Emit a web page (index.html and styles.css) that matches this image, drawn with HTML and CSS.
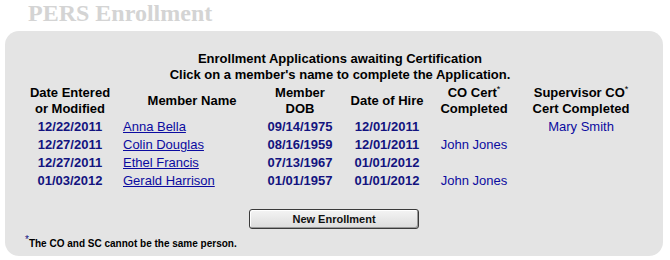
FILE: index.html
```html
<!DOCTYPE html>
<html lang="en">
<head>
  <meta charset="UTF-8" />
  <link rel="stylesheet" href="styles.css">
</head>
<body>

  <div class="page-title">PERS Enrollment</div>

  <div class="panel">
    <div class="panel-heading">
      Enrollment Applications awaiting Certification<br>
      Click on a member's name to complete the Application.
    </div>

    <table class="enroll-table">
      <colgroup>
        <col class="c-date">
        <col class="c-name">
        <col class="c-dob">
        <col class="c-hire">
        <col class="c-co">
        <col class="c-sup">
      </colgroup>
      <thead>
        <tr>
          <th>Date Entered<br>or Modified</th>
          <th>Member Name</th>
          <th>Member<br>DOB</th>
          <th>Date of Hire</th>
          <th>CO Cert<sup>*</sup><br>Completed</th>
          <th>Supervisor CO<sup>*</sup><br>Cert Completed</th>
        </tr>
      </thead>
      <tbody>
        <tr>
          <td class="date">12/22/2011</td>
          <td class="name"><a href="#">Anna Bella</a></td>
          <td class="date">09/14/1975</td>
          <td class="date">12/01/2011</td>
          <td class="who"></td>
          <td class="who">Mary Smith</td>
        </tr>
        <tr>
          <td class="date">12/27/2011</td>
          <td class="name"><a href="#">Colin Douglas</a></td>
          <td class="date">08/16/1959</td>
          <td class="date">12/01/2011</td>
          <td class="who">John Jones</td>
          <td class="who"></td>
        </tr>
        <tr>
          <td class="date">12/27/2011</td>
          <td class="name"><a href="#">Ethel Francis</a></td>
          <td class="date">07/13/1967</td>
          <td class="date">01/01/2012</td>
          <td class="who"></td>
          <td class="who"></td>
        </tr>
        <tr>
          <td class="date">01/03/2012</td>
          <td class="name"><a href="#">Gerald Harrison</a></td>
          <td class="date">01/01/1957</td>
          <td class="date">01/01/2012</td>
          <td class="who">John Jones</td>
          <td class="who"></td>
        </tr>
      </tbody>
    </table>

    <div class="actions">
      <button type="button">New Enrollment</button>
    </div>

    <div class="footnote"><sup>*</sup>The CO and SC cannot be the same person.</div>
  </div>

</body>
</html>
```

FILE: styles.css
```css
body {
  margin: 0;
  font-family: "Liberation Sans", Arial, sans-serif;
  background-color: #ffffff;
}

.page-title {
  font-family: "Liberation Serif", "Times New Roman", serif;
  font-weight: bold;
  font-size: 24px;
  line-height: 26px;
  color: #d4d4d4;
  padding-left: 28px;
}

.panel {
  margin: 5px 7px 0 5px;
  padding: 20px 0 5px 0;
  background-color: #e4e4e4;
  border-radius: 14px;
}

.panel-heading {
  text-align: center;
  font-weight: bold;
  font-size: 13px;
  line-height: 16px;
  padding-left: 12px;
}

.enroll-table {
  table-layout: fixed;
  border-collapse: collapse;
  width: 632px;
  margin: 2px 0 0 15px;
  font-size: 13px;
}

.c-date { width: 100px; }
.c-name { width: 144px; }
.c-dob { width: 72px; }
.c-hire { width: 102px; }
.c-co { width: 72px; }
.c-sup { width: 142px; }

.enroll-table th {
  padding: 0 0 1px 0;
  line-height: 16px;
  font-weight: bold;
  text-align: center;
  vertical-align: middle;
}

.enroll-table sup {
  font-size: 9px;
  font-weight: normal;
  line-height: 0;
  vertical-align: 5px;
}

.enroll-table td {
  padding: 0;
  height: 18px;
  line-height: 18px;
  text-align: center;
  white-space: nowrap;
}

.enroll-table td.date {
  font-weight: bold;
  color: #13137f;
}

.enroll-table td.name {
  text-align: left;
  padding-left: 3px;
}

.enroll-table td.name a {
  color: #0b0ba0;
  text-decoration: underline;
}

.enroll-table td.who {
  color: #0b0ba0;
}

.actions {
  text-align: center;
  margin-top: 19px;
}

.actions button {
  width: 170px;
  height: 20px;
  padding: 0;
  font-family: "Liberation Sans", Arial, sans-serif;
  font-weight: bold;
  font-size: 11px;
  color: #111;
  background: linear-gradient(#f4f4f4, #dcdcdc);
  border: 1px solid #3a3a3a;
  border-radius: 3px;
  box-shadow: inset -1px -1px 0 #9a9a9a, inset 1px 1px 0 #ffffff;
  cursor: pointer;
}

.footnote {
  margin-top: 8px;
  padding-left: 20px;
  font-size: 10px;
  font-weight: bold;
  line-height: 14px;
}

.footnote sup {
  color: #13137f;
  font-size: 10px;
  font-weight: normal;
  line-height: 0;
  vertical-align: 4px;
}
```
